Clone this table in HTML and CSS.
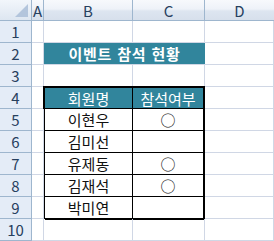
FILE: index.html
```html
<!DOCTYPE html>
<html lang="ko">
<head>
<meta charset="utf-8">
<link rel="stylesheet" href="styles.css">
</head>
<body>
<div class="sheet">
  <div class="corner"><span class="tri"></span></div>
  <div class="ch">A</div><div class="ch">B</div><div class="ch">C</div><div class="ch last">D</div>

  <div class="rh">1</div><div class="c"></div><div class="c"></div><div class="c"></div><div class="c"></div>
  <div class="rh">2</div><div class="c"></div><div class="title">이벤트 참석 현황</div><div class="c"></div>
  <div class="rh">3</div><div class="c"></div><div class="c"></div><div class="c"></div><div class="c"></div>
  <div class="rh">4</div><div class="c"></div>
  <div class="tbl">
    <div class="th">회원명</div><div class="th">참석여부</div>
    <div class="td">이현우</div><div class="td">○</div>
    <div class="td">김미선</div><div class="td"></div>
    <div class="td">유제동</div><div class="td">○</div>
    <div class="td">김재석</div><div class="td">○</div>
    <div class="td">박미연</div><div class="td"></div>
  </div>
  <div class="c"></div>
  <div class="rh">5</div><div class="c"></div><div class="c"></div>
  <div class="rh">6</div><div class="c"></div><div class="c"></div>
  <div class="rh">7</div><div class="c"></div><div class="c"></div>
  <div class="rh">8</div><div class="c"></div><div class="c"></div>
  <div class="rh">9</div><div class="c"></div><div class="c"></div>
  <div class="rh">10</div><div class="c"></div><div class="c"></div><div class="c"></div><div class="c"></div>
</div>
</body>
</html>
```
FILE: styles.css
```css
* { box-sizing: border-box; }
html, body { margin: 0; padding: 0; background: #fff; overflow: hidden; }
body { font-family: "Noto Sans CJK KR", "Noto Sans", sans-serif; }
.sheet {
  display: grid;
  grid-template-columns: 32px 12px 89px 72px 69px;
  grid-template-rows: 21px repeat(10, 22px);
  width: 274px;
  height: 241px;
}
.corner {
  background: linear-gradient(#f2f6fb, #dde6f1);
  border-right: 1px solid #9eb6ce;
  border-bottom: 1px solid #9eb6ce;
  position: relative;
}
.tri {
  position: absolute;
  right: 3px;
  bottom: 3px;
  width: 0; height: 0;
  border-left: 13px solid transparent;
  border-bottom: 13px solid #b3c5dc;
}
.ch {
  background: linear-gradient(#f7f9fc 0%, #eef2f8 45%, #dde5f0 55%, #d7e0ec 100%);
  border-right: 1px solid #9eb6ce;
  border-bottom: 1px solid #9eb6ce;
  display: flex; align-items: center; justify-content: center;
  font-size: 15px; color: #27405e;
  line-height: 1;
}
.ch.last { border-right: none; }
.rh {
  background: #e4ecf7;
  border-right: 1px solid #9eb6ce;
  border-bottom: 1px solid #9eb6ce;
  display: flex; align-items: center; justify-content: center;
  font-size: 15px; color: #27405e;
  line-height: 1;
}
.c {
  border-right: 1px solid #d0d7e5;
  border-bottom: 1px solid #d0d7e5;
}
.title {
  grid-column: span 2;
  background: #31859c;
  border-bottom: 1px solid #d0d7e5;
  color: #fff;
  font-weight: bold;
  font-size: 15px;
  display: flex; align-items: center; justify-content: center;
  line-height: 1;
  letter-spacing: 0.8px;
}
.tbl {
  grid-column: 3 / 5;
  grid-row: 5 / 11;
  margin: -1px 0 0 -1px;
  border-top: 2px solid #000;
  border-left: 2px solid #000;
  display: grid;
  grid-template-columns: 1fr 72px;
  grid-template-rows: 21px repeat(4, 22px) 23px;
}
.th, .td {
  border-right: 1px solid #000;
  border-bottom: 1px solid #000;
  display: flex; align-items: center; justify-content: center;
  font-size: 15px; line-height: 1;
}
.th { background: #31859c; color: #fff; }
.td { color: #111; }
.tbl > :nth-child(2n) { border-right: 2px solid #000; }
.tbl > :nth-last-child(-n+2) { border-bottom: 2px solid #000; }
```
